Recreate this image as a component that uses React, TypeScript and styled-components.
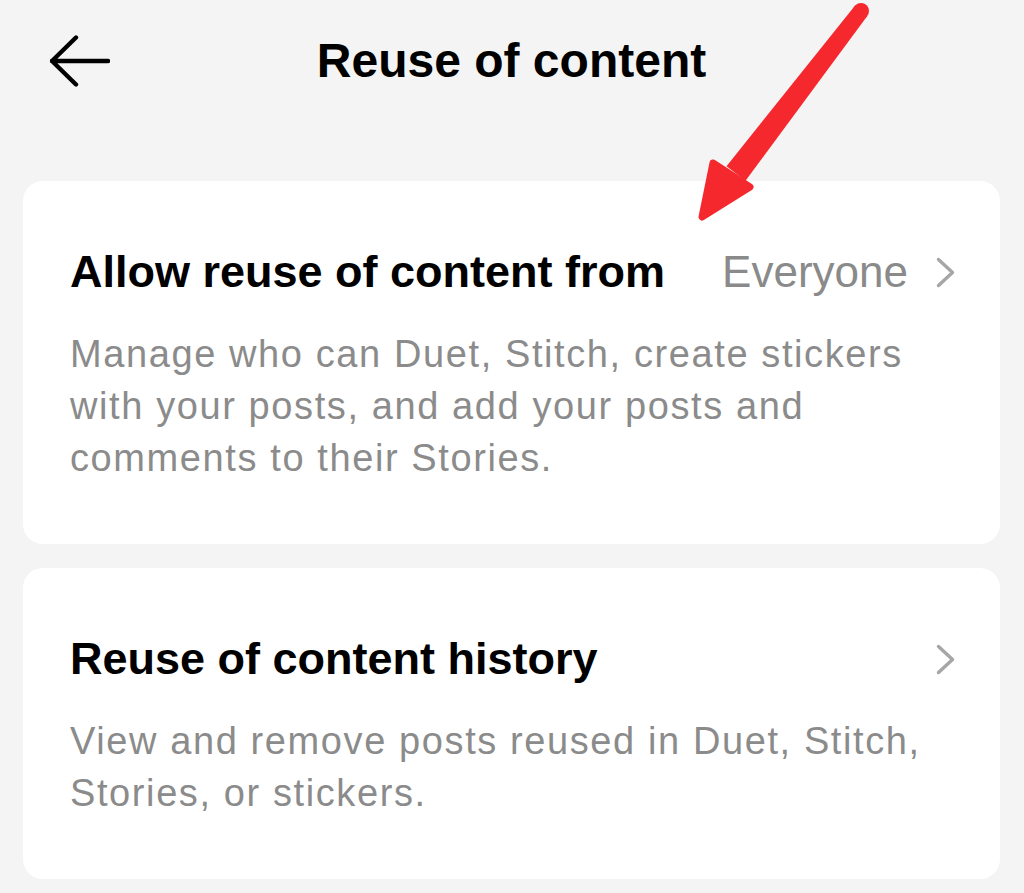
import React from "react";
import styled, { createGlobalStyle } from "styled-components";

const GlobalStyle = createGlobalStyle`
  html, body {
    margin: 0;
    padding: 0;
    background: #f4f4f4;
  }
  * { box-sizing: border-box; }
`;

const Screen = styled.div`
  position: relative;
  width: 1024px;
  min-height: 893px;
  background: #f4f4f4;
  font-family: "Liberation Sans", Arial, sans-serif;
  padding: 0 24px 0 23px;
  overflow: hidden;
`;

const Header = styled.header`
  height: 122px;
  display: grid;
  grid-template-columns: 1fr auto 1fr;
  align-items: center;
  margin-bottom: 59px;
`;

const BackButton = styled.button`
  justify-self: start;
  margin-left: 27px;
  padding: 0;
  border: 0;
  background: none;
  display: flex;
  width: 60px;
  height: 52px;
  cursor: pointer;
`;

const Title = styled.h1`
  margin: 0;
  font-size: 48px;
  line-height: 48px;
  font-weight: 700;
  color: #000;
  white-space: nowrap;
`;

const CardList = styled.div`
  display: flex;
  flex-direction: column;
  gap: 24px;
`;

const Card = styled.section`
  background: #fff;
  border-radius: 20px;
  padding: 61px 45px 60px 47px;
`;

const Row = styled.div`
  display: flex;
  align-items: center;
  justify-content: space-between;
  height: 60px;
`;

const Heading = styled.h2`
  margin: 0;
  font-size: 45px;
  line-height: 60px;
  font-weight: 700;
  color: #000;
  white-space: nowrap;
`;

const Trailing = styled.div`
  display: flex;
  align-items: center;
  gap: 28px;
`;

const Value = styled.span`
  font-size: 44px;
  line-height: 60px;
  color: #8a8a8a;
`;

const Description = styled.p`
  margin: 26px 0 0;
  font-size: 38px;
  line-height: 52px;
  letter-spacing: 1.6px;
  color: #8b8b8b;
  max-width: 880px;
`;

const Annotation = styled.svg`
  position: absolute;
  left: 0;
  top: 0;
  pointer-events: none;
`;

const BackArrow = () => (
  <svg width="60" height="52" viewBox="0 0 60 52" fill="none">
    <path
      d="M2 26 H58 M26 2.5 L2 26 L26 49.5"
      stroke="#000"
      strokeWidth="4.4"
      strokeLinecap="round"
      strokeLinejoin="round"
    />
  </svg>
);

const Chevron = () => (
  <svg width="19" height="31" viewBox="0 0 19 31" fill="none">
    <polyline
      points="2.5,2.5 16.5,15.5 2.5,28.5"
      stroke="#a6a6a6"
      strokeWidth="3.4"
      strokeLinecap="round"
      strokeLinejoin="round"
    />
  </svg>
);

export default function App() {
  return (
    <>
      <GlobalStyle />
      <Screen>
        <Header>
          <BackButton aria-label="Back">
            <BackArrow />
          </BackButton>
          <Title>Reuse of content</Title>
          <span />
        </Header>
        <CardList>
          <Card>
            <Row>
              <Heading>Allow reuse of content from</Heading>
              <Trailing>
                <Value>Everyone</Value>
                <Chevron />
              </Trailing>
            </Row>
            <Description>
              Manage who can Duet, Stitch, create stickers with your posts, and
              add your posts and comments to their Stories.
            </Description>
          </Card>
          <Card>
            <Row>
              <Heading>Reuse of content history</Heading>
              <Trailing>
                <Chevron />
              </Trailing>
            </Row>
            <Description>
              View and remove posts reused in Duet, Stitch, Stories, or
              stickers.
            </Description>
          </Card>
        </CardList>
        <Annotation width="1024" height="893" viewBox="0 0 1024 893">
          <circle cx="861" cy="11" r="8" fill="#f5282e" />
          <polygon
            points="867.3,15.9 854.7,6.1 726.5,166.2 745.5,180.8"
            fill="#f5282e"
          />
          <polygon
            points="713,163 750,187 702,217"
            fill="#f5282e"
            stroke="#f5282e"
            strokeWidth="7"
            strokeLinejoin="round"
          />
        </Annotation>
      </Screen>
    </>
  );
}
